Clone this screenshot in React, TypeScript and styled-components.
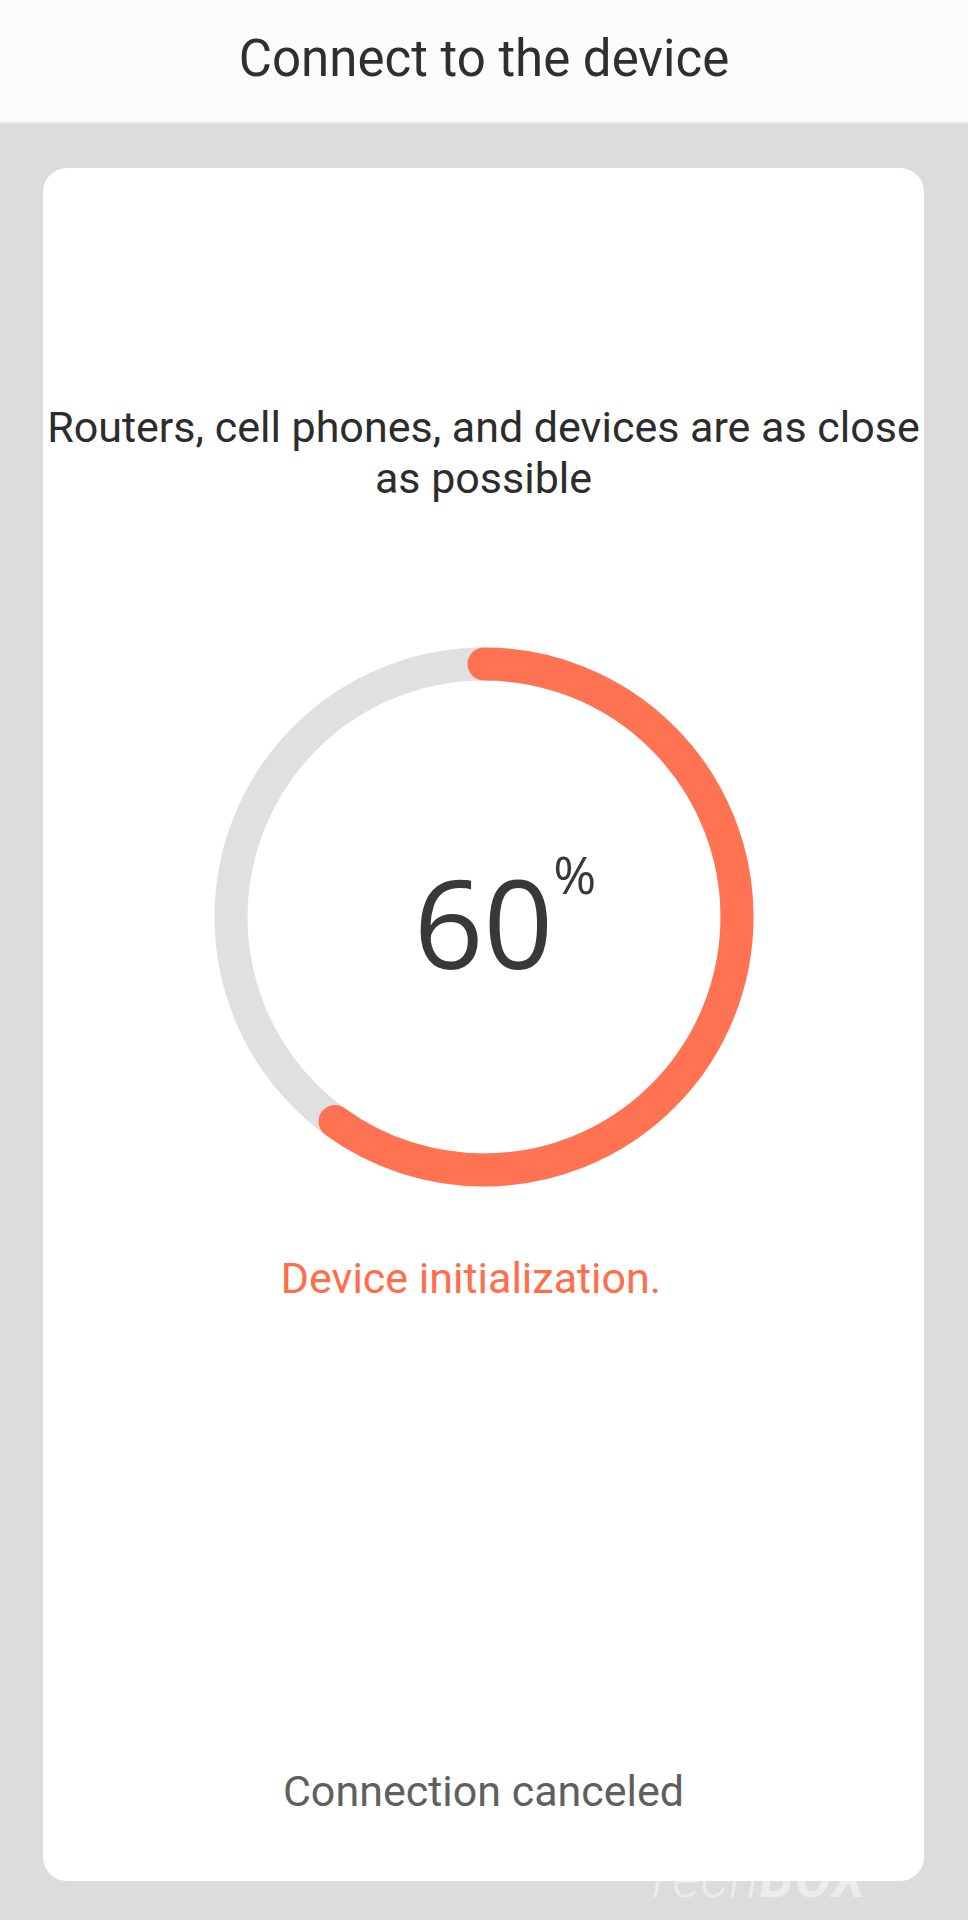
import React from "react";
import styled, { createGlobalStyle } from "styled-components";

const Global = createGlobalStyle`
  html, body {
    margin: 0;
    padding: 0;
    background: #dcdcdc;
  }
  body {
    font-family: Roboto, "Noto Sans", "Liberation Sans", sans-serif;
    -webkit-font-smoothing: antialiased;
  }
`;

const Page = styled.div`
  position: relative;
  width: 968px;
  height: 1920px;
  background: #dcdcdc;
  overflow: hidden;
`;

const Header = styled.header`
  height: 122px;
  box-sizing: content-box;
  background: #fcfcfc;
  border-bottom: 2px solid #e6e6e6;
  display: flex;
  align-items: center;
  justify-content: center;
`;

const Title = styled.h1`
  margin: 0 0 6px;
  font-family: Roboto, "Liberation Sans", sans-serif;
  font-weight: 400;
  font-size: 51px;
  line-height: 1;
  color: #2f2f2f;
`;

const Card = styled.main`
  margin: 44px 44px 0 43px;
  height: 1713px;
  box-sizing: border-box;
  background: #ffffff;
  border-radius: 24px;
  display: flex;
  flex-direction: column;
  align-items: center;
  padding: 234px 4px 0;
`;

const Hint = styled.p`
  margin: 0;
  font-size: 43px;
  line-height: 51px;
  color: #2c2c2c;
  text-align: center;
`;

const Dial = styled.div`
  margin-top: 143px;
  width: 540px;
  height: 540px;
  display: grid;
  place-items: center;
  & > * {
    grid-area: 1 / 1;
  }
`;

const Ring = styled.svg`
  width: 540px;
  height: 540px;
  display: block;
`;

const Value = styled.span`
  position: relative;
  font-family: "Open Sans", "Noto Sans", sans-serif;
  font-size: 122px;
  line-height: 127px;
  color: #383838;
  margin-top: 11px;
`;

const Percent = styled.sup`
  position: absolute;
  left: 100%;
  top: -12px;
  margin-left: 0px;
  font-family: "Open Sans", "Noto Sans", sans-serif;
  font-size: 52px;
  line-height: 54px;
  color: #383838;
  vertical-align: baseline;
`;

const Status = styled.p`
  margin: 66px 25px 0 0;
  font-size: 43px;
  line-height: 50px;
  color: #ff6d4a;
  text-align: center;
`;

const Cancel = styled.button`
  margin: auto 0 65px;
  padding: 0;
  border: none;
  background: transparent;
  font-family: Roboto, "Liberation Sans", sans-serif;
  font-size: 43px;
  line-height: 50px;
  color: #5f5f5f;
  cursor: pointer;
`;

const Watermark = styled.div`
  position: absolute;
  left: 642px;
  top: 1851px;
  font-family: Roboto, "Liberation Sans", sans-serif;
  font-style: italic;
  font-size: 55px;
  line-height: 55px;
  color: rgba(255, 255, 255, 0.45);
  letter-spacing: 1px;
  pointer-events: none;
  b {
    font-weight: 700;
  }
  span {
    font-weight: 300;
  }
`;

const R = 253;
const C = 2 * Math.PI * R;

export default function App() {
  const progress = 0.6;
  return (
    <Page>
      <Global />
      <Header>
        <Title>Connect to the device</Title>
      </Header>
      <Card>
        <Hint>
          Routers, cell phones, and devices are as close
          <br />
          as possible
        </Hint>
        <Dial>
          <Ring viewBox="0 0 540 540">
            <circle cx="270" cy="270" r={R} fill="none" stroke="#e0e0e0" strokeWidth="33" />
            <circle
              cx="270"
              cy="270"
              r={R}
              fill="none"
              stroke="#ff7252"
              strokeWidth="33"
              strokeLinecap="round"
              strokeDasharray={`${C * progress} ${C}`}
              transform="rotate(-90 270 270)"
            />
          </Ring>
          <Value>
            60
            <Percent>%</Percent>
          </Value>
        </Dial>
        <Status>Device initialization.</Status>
        <Cancel>Connection canceled</Cancel>
      </Card>
      <Watermark>
        <span>Tech</span>
        <b>BOX</b>
      </Watermark>
    </Page>
  );
}
